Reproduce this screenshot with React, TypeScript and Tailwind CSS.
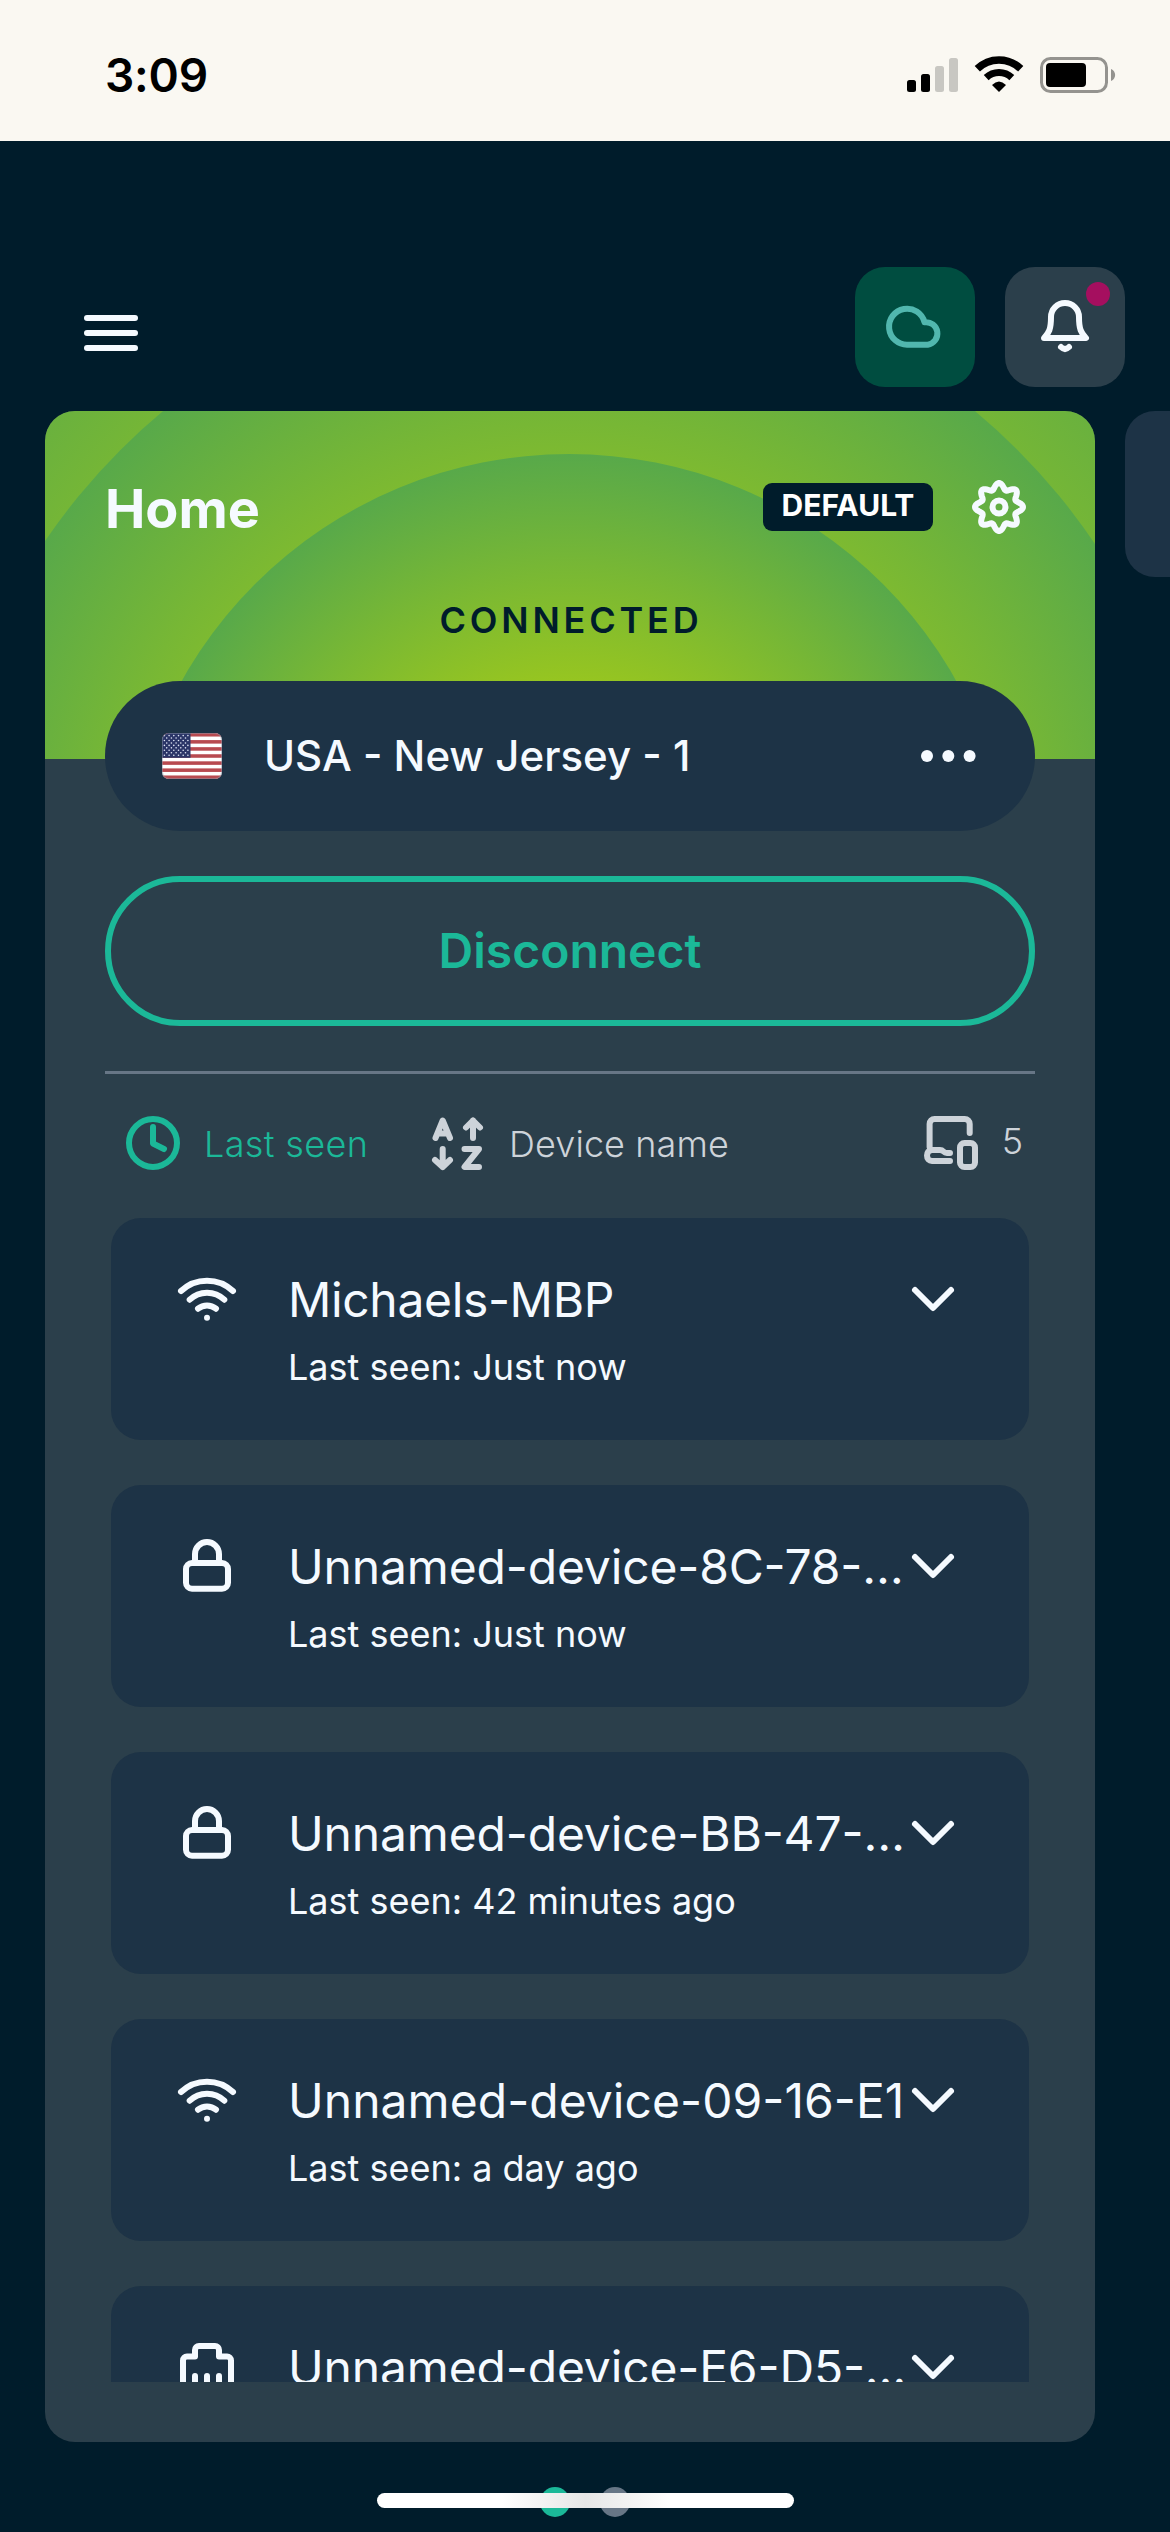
import type { ReactNode } from "react";

type Connection = "wifi" | "vpn" | "ethernet";

type Device = {
  id: number;
  name: string;
  lastSeen: string;
  connection: Connection;
  tracking: string;
};

const devices: Device[] = [
  {
    id: 1,
    name: "Michaels-MBP",
    lastSeen: "Just now",
    connection: "wifi",
    tracking: "tracking-[-0.35px]",
  },
  {
    id: 2,
    name: "Unnamed-device-8C-78-…",
    lastSeen: "Just now",
    connection: "vpn",
    tracking: "tracking-[-0.15px]",
  },
  {
    id: 3,
    name: "Unnamed-device-BB-47-…",
    lastSeen: "42 minutes ago",
    connection: "vpn",
    tracking: "tracking-[-0.15px]",
  },
  {
    id: 4,
    name: "Unnamed-device-09-16-E1",
    lastSeen: "a day ago",
    connection: "wifi",
    tracking: "tracking-[0.05px]",
  },
  {
    id: 5,
    name: "Unnamed-device-E6-D5-…",
    lastSeen: "a day ago",
    connection: "ethernet",
    tracking: "tracking-[-0.15px]",
  },
];

function Icon({ children, className = "" }: { children: ReactNode; className?: string }) {
  return (
    <svg
      viewBox="0 0 60 60"
      fill="none"
      stroke="currentColor"
      strokeWidth="6"
      strokeLinecap="round"
      strokeLinejoin="round"
      className={`h-[60px] w-[60px] shrink-0 ${className}`}
    >
      {children}
    </svg>
  );
}

function ConnectionIcon({ type }: { type: Connection }) {
  if (type === "wifi") {
    return (
      <Icon>
        <path d="M4 21A38 38 0 0 1 56 21" />
        <path d="M12.7 29.7A24.9 24.9 0 0 1 47.3 29.7" />
        <path d="M21 38.7A14.3 14.3 0 0 1 39 38.7" />
        <circle cx="30" cy="47.7" r="3" fill="currentColor" stroke="none" />
      </Icon>
    );
  }
  if (type === "vpn") {
    return (
      <Icon>
        <rect x="9" y="26" width="42" height="25.7" rx="6" />
        <path d="M18 26V17A12 12 0 0 1 42 17V26" />
      </Icon>
    );
  }
  return (
    <Icon>
      <path d="M6 54V22.5a4 4 0 0 1 4-4H18V12a4 4 0 0 1 4-4H38a4 4 0 0 1 4 4V18.5H50a4 4 0 0 1 4 4V54Z" />
      <path d="M18 38V50M30 38V50M42 38V50" />
    </Icon>
  );
}

// outline of the eight-lobed gear, sampled around the circle
const gearPoints = Array.from({ length: 144 }, (_, i) => {
  const angle = (i / 144) * Math.PI * 2;
  const radius = 20.9 + 3.1 * Math.cos(angle * 8);
  return `${(30 + radius * Math.sin(angle)).toFixed(2)},${(30 - radius * Math.cos(angle)).toFixed(2)}`;
}).join(" ");

function StatusBar() {
  return (
    <div className="flex h-[141px] items-center justify-between bg-[#faf8f2] pt-2 pr-[54px] pl-[105px] text-black">
      <span className="text-[46px] leading-[56px] font-semibold tracking-[-0.2px]">3:09</span>
      <svg viewBox="0 0 210 40" className="h-10 w-[210px]">
        <rect x="1" y="25" width="9" height="12" rx="2.5" />
        <rect x="15" y="19" width="9" height="18" rx="2.5" />
        <rect x="29" y="11" width="9" height="26" rx="2.5" fill="#c8c7c2" />
        <rect x="43" y="3" width="9" height="34" rx="2.5" fill="#c8c7c2" />
        <g fill="none" stroke="#000">
          <path d="M71.3 13.8A31 31 0 0 1 114.7 13.8" strokeWidth="7.5" />
          <path d="M80.2 22.6A18.5 18.5 0 0 1 105.8 22.6" strokeWidth="7" />
        </g>
        <path d="M86 30Q93 23 100 30L93 37Z" />
        <rect x="135.5" y="3.5" width="65" height="33" rx="9" fill="none" stroke="#94938f" strokeWidth="3" />
        <rect x="140" y="8" width="40" height="24" rx="4" />
        <path d="M205 14C210.5 16 210.5 24 205 26Z" fill="#94938f" />
      </svg>
    </div>
  );
}

function TopBar() {
  return (
    <header className="flex h-[270px] items-start justify-between pt-[126px] pr-[45px] pl-[84px]">
      <div className="mt-12 flex w-[54px] flex-col gap-[9px]">
        <span className="h-1.5 rounded-full bg-[#f5faff]" />
        <span className="h-1.5 rounded-full bg-[#f5faff]" />
        <span className="h-1.5 rounded-full bg-[#f5faff]" />
      </div>
      <div className="flex gap-[30px]">
        <button className="flex h-[120px] w-[120px] items-center justify-center rounded-[30px] bg-[#004d40] text-[#51b7ae]">
          <Icon>
            <path d="M22.7 47.7A18 18 0 1 1 39.5 25.3A11.2 11.2 0 1 1 42.7 47.7Z" />
          </Icon>
        </button>
        <button className="relative flex h-[120px] w-[120px] items-center justify-center rounded-[30px] bg-[#2b3f4b] text-[#f5faff]">
          <Icon>
            <path d="M16 20A14 14 0 0 1 44 20C44 32 46 36 51 41H9C14 36 16 32 16 20Z" />
            <path d="M26 50Q30 54 34 50" />
          </Icon>
          <span className="absolute top-[15px] right-[15px] h-6 w-6 rounded-full bg-[#a50f5f]" />
        </button>
      </div>
    </header>
  );
}

function Flag() {
  const stripes = [0, 2, 4, 6, 8, 10, 12];
  const rows = [0, 1, 2, 3, 4, 5, 6, 7, 8];
  return (
    <svg viewBox="0 0 60 46" className="h-[46px] w-[60px] rounded-[7px]">
      <rect width="60" height="46" fill="#fff" />
      {stripes.map((i) => (
        <rect key={i} y={i * 3.54} width="60" height="3.54" fill="#b84a50" />
      ))}
      <rect width="28.5" height="24.8" fill="#2a3567" />
      {rows.map((row) =>
        (row % 2 ? [0, 1, 2, 3, 4] : [0, 1, 2, 3, 4, 5]).map((col) => (
          <circle
            key={`${row}-${col}`}
            cx={(row % 2 ? 4.7 : 2.4) + col * 4.7}
            cy={2.6 + row * 2.45}
            r="0.8"
            fill="#dfe6f5"
          />
        ))
      )}
      <rect x="0.5" y="0.5" width="59" height="45" rx="6.5" fill="none" stroke="#8a93a5" strokeOpacity="0.5" />
    </svg>
  );
}

function Rings() {
  return (
    <svg viewBox="0 0 1050 348" className="absolute inset-0 h-[348px] w-[1050px]">
      <defs>
        <radialGradient id="ring">
          <stop offset="0" stopColor="#cedd00" />
          <stop offset="0.49" stopColor="#96c521" />
          <stop offset="0.75" stopColor="#77b735" />
          <stop offset="1" stopColor="#58a94a" />
        </radialGradient>
      </defs>
      <circle cx="524" cy="487" r="824" fill="url(#ring)" />
      <circle cx="524" cy="487" r="634" fill="url(#ring)" />
      <circle cx="524" cy="487" r="444" fill="url(#ring)" />
    </svg>
  );
}

function SortBar() {
  return (
    <div className="mt-[39px] flex h-[60px] items-center pr-3 pl-[18px] text-[36px] leading-[44px] font-light whitespace-nowrap">
      <div className="flex w-[245px] items-center gap-[21px] text-[#1bb898]">
        <Icon>
          <circle cx="30" cy="30" r="24" />
          <path d="M30 14V30.5L41 36" />
        </Icon>
        <span className="pt-0.5 tracking-[0.35px]">Last seen</span>
      </div>
      <div className="ml-[60px] flex items-center gap-[21px] text-[#cdd3d9]">
        <Icon>
          <path d="M7.5 25L14.7 7.5L22 25M10.5 20.5H19" />
          <path d="M45 25V7.5M38 14.5L45 7.5L52 14.5" />
          <path d="M14.7 36V54M7 47L14.7 54L22 47" />
          <path d="M36.5 36H51L36.5 54H51" />
        </Icon>
        <span className="pt-0.5 tracking-[0.1px]">Device name</span>
      </div>
      <div className="ml-auto flex items-center gap-[21px] text-[#cdd3d9]">
        <Icon>
          <path d="M8.6 34V11a5 5 0 0 1 5-5H43.7a5 5 0 0 1 5 5V20" />
          <path d="M29 40H26C22 40 23 37 19 37H11C7.5 37 6 39.5 6 42.5C6 46 8 48 11 48H29" />
          <rect x="39" y="30" width="15" height="24" rx="4.5" />
        </Icon>
        <span className="-mt-1">5</span>
      </div>
    </div>
  );
}

function DeviceCard({ device }: { device: Device }) {
  return (
    <li className="flex h-[222px] shrink-0 items-start rounded-[30px] bg-[#1d3346] px-[66px] pt-[52px] text-[#f5faff]">
      <ConnectionIcon type={device.connection} />
      <div className="ml-[51px] w-[615px] shrink-0 whitespace-nowrap">
        <p className={`text-[48px] leading-[60px] [font-feature-settings:'calt'_1] ${device.tracking}`}>
          {device.name}
        </p>
        <p className="mt-[15px] text-[36px] leading-[44px]">Last seen: {device.lastSeen}</p>
      </div>
      <Icon>
        <path d="M12 20L30 38L48 20" />
      </Icon>
    </li>
  );
}

function ProfileCard() {
  return (
    <section className="relative h-[2031px] w-[1050px] shrink-0 overflow-hidden rounded-[30px] bg-[#2b3f4b] px-[60px]">
      <Rings />
      <div className="relative">
        <div className="flex h-[120px] items-end">
          <h1 className="-mb-2 text-[54px] leading-[60px] font-bold text-[#f5faff]">Home</h1>
          <span className="ml-auto flex h-12 w-[170px] justify-center rounded-[9px] bg-[#001c2b] text-[30px] leading-[45px] font-bold text-white">
            DEFAULT
          </span>
          <Icon className="mr-1.5 -mb-1.5 ml-9 text-[#f5faff]">
            <polygon points={gearPoints} />
            <circle cx="30" cy="30" r="6.5" />
          </Icon>
        </div>
        <p className="mt-[67px] pl-0.5 text-center text-[36px] leading-[44px] font-semibold tracking-[3.8px] text-[#001c2b]">
          CONNECTED
        </p>
        <button className="mt-[39px] flex h-[150px] w-full items-center rounded-full bg-[#1d3346] px-[57px] text-[#f5faff]">
          <Flag />
          <span className="ml-[42px] text-[42px] leading-[52px] font-medium">USA - New Jersey - 1</span>
          <svg viewBox="0 0 60 60" fill="currentColor" className="ml-auto h-[60px] w-[60px]">
            <circle cx="9" cy="30" r="6" />
            <circle cx="30.3" cy="30" r="6" />
            <circle cx="51.6" cy="30" r="6" />
          </svg>
        </button>
        <button className="mt-[45px] h-[150px] w-full rounded-full border-[6px] border-[#1bb898] text-[48px] leading-[60px] font-semibold text-[#1bb898]">
          Disconnect
        </button>
        <hr className="mt-[45px] h-[3px] border-0 bg-[#677686]" />
        <SortBar />
        <ul className="mx-1.5 mt-[45px] flex h-[1164px] flex-col gap-[45px] overflow-hidden">
          {devices.map((device) => (
            <DeviceCard key={device.id} device={device} />
          ))}
        </ul>
      </div>
    </section>
  );
}

export default function App() {
  return (
    <div className="relative h-[2532px] w-[1170px] overflow-hidden bg-[#001c2b] font-[Inter,sans-serif]">
      <StatusBar />
      <TopBar />
      <main className="flex items-start gap-[30px] overflow-hidden pl-[45px]">
        <ProfileCard />
        <section className="h-[166px] w-[1050px] shrink-0 rounded-[30px] bg-[#1d3346]" />
      </main>
      <div className="mt-[45px] flex justify-center gap-[30px]">
        <span className="h-[30px] w-[30px] rounded-full bg-[#1bb898]" />
        <span className="h-[30px] w-[30px] rounded-full bg-[#677686]" />
      </div>
      <div className="absolute top-[2493px] left-[377px] h-[15px] w-[417px] rounded-full bg-linear-to-r from-white from-30% via-[#e6e6e6] via-50% to-white to-70%" />
    </div>
  );
}
